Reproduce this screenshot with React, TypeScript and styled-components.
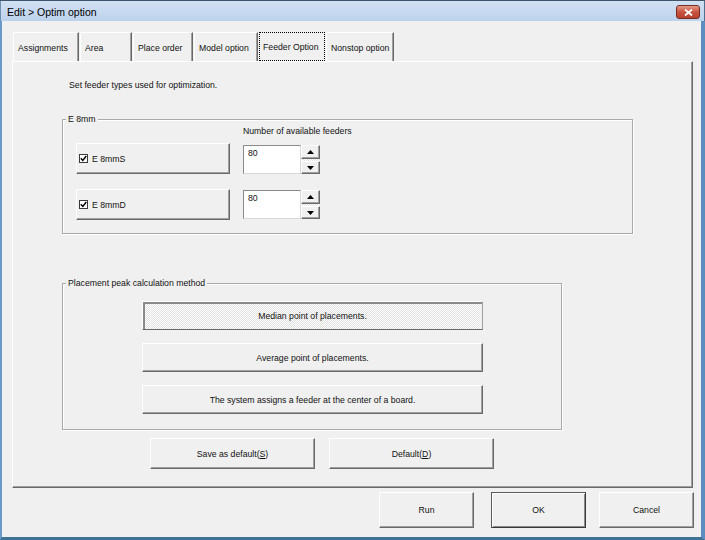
import React from 'react';
import styled, { createGlobalStyle, css } from 'styled-components';

const Global = createGlobalStyle`
  html, body { margin: 0; padding: 0; background: #f0f0f0; }
  body { font-family: "Liberation Sans", Arial, sans-serif; font-size: 8.7px; color: #111; }
  * { box-sizing: border-box; }
`;

const dither = css`
  background: repeating-conic-gradient(#ffffff 0 25%, #e2e2e2 0 50%) 0 0 / 2px 2px;
`;

const raised = css`
  border-style: solid;
  border-width: 1px;
  border-color: #ffffff #696969 #696969 #ffffff;
  box-shadow: inset -1px -1px 0 #a0a0a0;
  background: #f0f0f0;
`;

const Window = styled.div`
  width: 705px;
  height: 540px;
  display: flex;
  flex-direction: column;
  border-top: 1px solid #3e556c;
  overflow: hidden;
`;

const TitleBar = styled.div`
  height: 20px;
  flex: none;
  display: flex;
  align-items: center;
  justify-content: space-between;
  padding: 1px 4px 0 6px;
  background: linear-gradient(#d2e1f3, #bcd2ec);
  border-left: 1px solid #6f8fb0;
  border-right: 1px solid #50708f;
`;

const Title = styled.span`
  font-size: 10.5px;
  color: #000;
`;

const CloseButton = styled.div`
  width: 24px;
  height: 14px;
  margin-top: 1px;
  border: 1px solid #7a2c22;
  border-radius: 3px;
  background: linear-gradient(#e29a88, #c8533f 50%, #b8412c);
  display: flex;
  align-items: center;
  justify-content: center;
`;

const Body = styled.div`
  flex: 1;
  display: flex;
  flex-direction: column;
  background: #f0f0f0;
  border-left: 2px solid #6a98c8;
  border-right: 4px solid #5b8dbf;
  border-bottom: 3px solid #3f7396;
  padding: 11px 7px 0 10px;
`;

const TabStrip = styled.div`
  display: flex;
  gap: 1px;
  padding-left: 1px;
  height: 29px;
`;

const Tab = styled.div<{ $w: number; $active?: boolean }>`
  width: ${p => p.$w}px;
  height: 29px;
  display: flex;
  align-items: center;
  padding: 2px 0 0 4px;
  white-space: nowrap;
  overflow: hidden;
  border-left: 1px solid #ffffff;
  border-top: 1px solid #ffffff;
  border-right: 1px solid #696969;
  box-shadow: inset -1px 0 0 #a0a0a0;
  ${p =>
    p.$active &&
    css`
      border: 1px dotted #000;
      box-shadow: none;
      padding: 0 0 0 3px;
    `}
`;

const Panel = styled.div`
  height: 427px;
  margin-right: 1px;
  border-style: solid;
  border-width: 1px;
  border-color: #ffffff #696969 #696969 #ffffff;
  box-shadow: inset -1px -1px 0 #a0a0a0;
  display: flex;
  flex-direction: column;
  align-items: flex-start;
  padding: 17px 0 0 49px;
`;

const Text = styled.div<{ $ml?: number }>`
  line-height: 12px;
  margin-left: ${p => p.$ml ?? 0}px;
  white-space: nowrap;
`;

const GroupBox = styled.div<{ $w: number; $h: number; $mt: number; $pad: string }>`
  position: relative;
  width: ${p => p.$w}px;
  height: ${p => p.$h}px;
  margin-top: ${p => p.$mt}px;
  padding: ${p => p.$pad};
  border: 1px solid #a9a9a9;
  box-shadow: inset 1px 1px 0 #ffffff, 1px 1px 0 #ffffff;
  display: flex;
  flex-direction: column;
  align-items: flex-start;
`;

const Legend = styled.span`
  position: absolute;
  top: -7px;
  left: 3px;
  padding: 0 2px;
  line-height: 12px;
  background: #f0f0f0;
  white-space: nowrap;
`;

const Row = styled.div<{ $mt: number }>`
  display: flex;
  align-items: flex-start;
  gap: 13px;
  margin-top: ${p => p.$mt}px;
`;

const CheckButton = styled.div`
  ${raised};
  width: 154px;
  height: 31px;
  display: flex;
  align-items: center;
  gap: 4px;
  padding-left: 2px;
`;

const CheckBox = styled.span`
  width: 9px;
  height: 9px;
  border: 1px solid #3a3a3a;
  background: #fff;
  display: flex;
  align-items: center;
  justify-content: center;
`;

const Spin = styled.div<{ $mt: number }>`
  display: flex;
  margin-top: ${p => p.$mt}px;
`;

const NumInput = styled.div`
  width: 58px;
  height: 29px;
  background: #fff;
  border: 1px solid;
  border-color: #8a8a8a #d8d8d8 #d8d8d8 #8a8a8a;
  padding: 2px 0 0 4px;
  line-height: 10px;
`;

const SpinCol = styled.div`
  width: 19px;
  height: 29px;
  display: flex;
  flex-direction: column;
  justify-content: space-between;
  ${dither};
`;

const SpinBtn = styled.div<{ $h: number }>`
  ${raised};
  height: ${p => p.$h}px;
  display: flex;
  align-items: center;
  justify-content: center;
`;

const WideButton = styled.div<{ $pressed?: boolean }>`
  ${raised};
  width: 341px;
  height: 29px;
  display: flex;
  align-items: center;
  justify-content: center;
  ${p =>
    p.$pressed &&
    css`
      ${dither};
      border-color: #ffffff #a0a0a0 #696969 #ffffff;
      box-shadow: inset 2px 2px 0 #8a8a8a;
    `}
`;

const WideStack = styled.div`
  display: flex;
  flex-direction: column;
  gap: 13px;
`;

const PanelButtons = styled.div`
  display: flex;
  gap: 14px;
  margin: 8px 0 0 88px;
`;

const PanelButton = styled.div`
  ${raised};
  width: 165px;
  height: 31px;
  display: flex;
  align-items: center;
  justify-content: center;
`;

const Footer = styled.div`
  display: flex;
  justify-content: flex-end;
  margin-top: 4px;
`;

const FooterButton = styled.div<{ $ml: number; $default?: boolean }>`
  ${raised};
  width: 95px;
  height: 36px;
  margin-left: ${p => p.$ml}px;
  display: flex;
  align-items: center;
  justify-content: center;
  ${p =>
    p.$default &&
    css`
      border-color: #5a5a5a #3a3a3a #3a3a3a #5a5a5a;
      box-shadow: inset 1px 1px 0 #ffffff, inset -1px -1px 0 #8a8a8a;
    `}
`;

const Arrow = ({ up }: { up?: boolean }) => (
  <svg width="7" height="4" viewBox="0 0 7 4">
    <polygon points={up ? '3.5,0 7,4 0,4' : '0,0 7,0 3.5,4'} fill="#000" />
  </svg>
);

const Check = () => (
  <svg width="7" height="7" viewBox="0 0 7 7">
    <path d="M0.8 3.3 L2.8 5.4 L6.3 1" stroke="#000" strokeWidth="1.5" fill="none" />
  </svg>
);

const CloseX = () => (
  <svg width="9" height="7" viewBox="0 0 9 7">
    <path d="M1 0.5 L8 6.5 M8 0.5 L1 6.5" stroke="#fff" strokeWidth="1.8" />
  </svg>
);

const tabs = [
  { label: 'Assignments', w: 66 },
  { label: 'Area', w: 52 },
  { label: 'Place order', w: 60 },
  { label: 'Model option', w: 64 },
  { label: 'Feeder Option', w: 66, active: true },
  { label: 'Nonstop option', w: 68 },
];

const feeders = [
  { name: 'E 8mmS', value: '80', mt: 6, spinMt: 2 },
  { name: 'E 8mmD', value: '80', mt: 15, spinMt: 1 },
];

export default function App() {
  return (
    <>
      <Global />
      <Window>
        <TitleBar>
          <Title>Edit &gt; Optim option</Title>
          <CloseButton>
            <CloseX />
          </CloseButton>
        </TitleBar>
        <Body>
          <TabStrip>
            {tabs.map(t => (
              <Tab key={t.label} $w={t.w} $active={t.active}>
                {t.label}
              </Tab>
            ))}
          </TabStrip>
          <Panel>
            <Text $ml={7}>Set feeder types used for optimization.</Text>
            <GroupBox $w={571} $h={115} $mt={28} $pad="5px 0 0 13px">
              <Legend>E 8mm</Legend>
              <Text $ml={167}>Number of available feeders</Text>
              {feeders.map(f => (
                <Row key={f.name} $mt={f.mt}>
                  <CheckButton>
                    <CheckBox>
                      <Check />
                    </CheckBox>
                    {f.name}
                  </CheckButton>
                  <Spin $mt={f.spinMt}>
                    <NumInput>{f.value}</NumInput>
                    <SpinCol>
                      <SpinBtn $h={14}>
                        <Arrow up />
                      </SpinBtn>
                      <SpinBtn $h={13}>
                        <Arrow />
                      </SpinBtn>
                    </SpinCol>
                  </Spin>
                </Row>
              ))}
            </GroupBox>
            <GroupBox $w={500} $h={147} $mt={49} $pad="17px 0 0 79px">
              <Legend>Placement peak calculation method</Legend>
              <WideStack>
                <WideButton $pressed>Median point of placements.</WideButton>
                <WideButton>Average point of placements.</WideButton>
                <WideButton>The system assigns a feeder at the center of a board.</WideButton>
              </WideStack>
            </GroupBox>
            <PanelButtons>
              <PanelButton>
                <span>
                  Save as default(<u>S</u>)
                </span>
              </PanelButton>
              <PanelButton>
                <span>
                  Default(<u>D</u>)
                </span>
              </PanelButton>
            </PanelButtons>
          </Panel>
          <Footer>
            <FooterButton $ml={0}>Run</FooterButton>
            <FooterButton $ml={17} $default>
              OK
            </FooterButton>
            <FooterButton $ml={13}>Cancel</FooterButton>
          </Footer>
        </Body>
      </Window>
    </>
  );
}
